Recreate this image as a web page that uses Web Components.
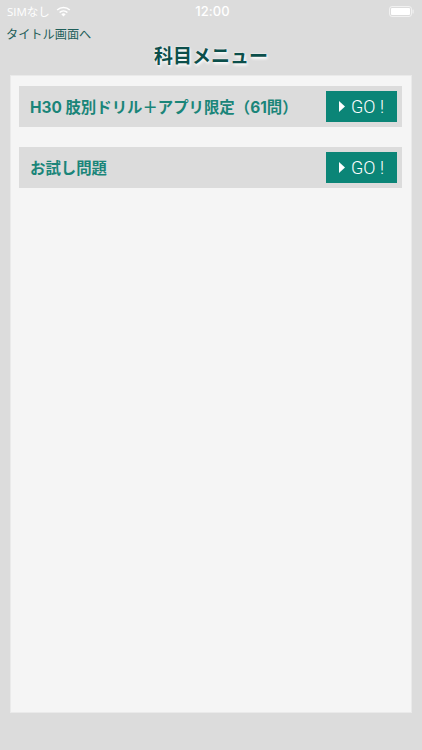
<!DOCTYPE html>
<html lang="ja">
<head>
<meta charset="utf-8">
<title>科目メニュー</title>
<style>
  html, body { margin: 0; height: 100%; }
  body { background: #dcdcdc; font-family: "Open Sans", "Noto Sans CJK JP", sans-serif; }
</style>
</head>
<body>
<menu-screen>
  <menu-row label="H30 肢別ドリル＋アプリ限定（61問）"></menu-row>
  <menu-row label="お試し問題"></menu-row>
</menu-screen>

<script>
const FONT = '"Open Sans", "Noto Sans CJK JP", sans-serif';

class StatusBar extends HTMLElement {
  constructor() {
    super();
    this.attachShadow({ mode: 'open' });
    this.shadowRoot.innerHTML = `
      <style>
        :host { display: grid; grid-template-columns: 1fr auto 1fr; align-items: center; height: 22px; padding: 0 8px 0 7px; color: #fff; font: 12px ${FONT}; }
        .left { display: flex; align-items: center; gap: 6px; }
        .carrier { font-size: 11.5px; }
        .time { font: 500 13px Inter, sans-serif; letter-spacing: .1px; padding-left: 4px; }
        .right { display: flex; justify-content: flex-end; }
        svg { display: block; }
      </style>
      <div class="left">
        <span class="carrier">SIMなし</span>
        <svg width="15" height="11" viewBox="0 0 15 11">
          <path d="M7.5 10.6 5.3 8.2a3.2 3.2 0 0 1 4.4 0Z" fill="#fff"/>
          <path d="M3.6 6.5a5.7 5.7 0 0 1 7.8 0" fill="none" stroke="#fff" stroke-width="1.6"/>
          <path d="M1.2 4a9.2 9.2 0 0 1 12.6 0" fill="none" stroke="#fff" stroke-width="1.6"/>
        </svg>
      </div>
      <span class="time">12:00</span>
      <div class="right">
        <svg width="25" height="11" viewBox="0 0 25 11">
          <rect x=".5" y=".5" width="22" height="10" rx="2.5" fill="none" stroke="#fff" stroke-opacity=".6"/>
          <rect x="2" y="2" width="19" height="7" rx="1" fill="#fff"/>
          <rect x="23.5" y="3.5" width="1.2" height="4" rx=".6" fill="#fff" fill-opacity=".6"/>
        </svg>
      </div>
    `;
  }
}

class GoButton extends HTMLElement {
  constructor() {
    super();
    this.attachShadow({ mode: 'open' });
    this.shadowRoot.innerHTML = `
      <style>
        :host { display: flex; align-items: center; justify-content: center; gap: 6px; width: 71px; height: 31px; background: #0b8577; color: #fff; font: 300 18px Roboto, sans-serif; }
        svg { display: block; }
      </style>
      <svg width="6" height="11" viewBox="0 0 6 11"><path d="M0 0 6 5.5 0 11Z" fill="#fff"/></svg>
      <span>GO !</span>
    `;
  }
}

class MenuRow extends HTMLElement {
  constructor() {
    super();
    this.attachShadow({ mode: 'open' });
  }

  connectedCallback() {
    this.shadowRoot.innerHTML = `
      <style>
        :host { display: flex; align-items: center; justify-content: space-between; height: 41px; padding: 0 5px 0 11px; background: #dcdcdc; }
        .label { color: #1a8579; font: bold 15.4px Inter, "Noto Sans CJK JP", sans-serif; white-space: nowrap; padding-bottom: 2px; }
      </style>
      <span class="label">${this.getAttribute('label')}</span>
      <go-button></go-button>
    `;
  }
}

class MenuScreen extends HTMLElement {
  constructor() {
    super();
    this.attachShadow({ mode: 'open' });
    this.shadowRoot.innerHTML = `
      <style>
        :host { display: flex; flex-direction: column; box-sizing: border-box; height: 750px; padding-bottom: 37px; }
        .back { padding: 5px 0 0 6px; height: 14px; line-height: 15px; color: #1f5f5a; font-size: 12.2px; }
        h1 { margin: 0; height: 34px; line-height: 30px; text-align: center; color: #0c4f4b; font-size: 19px; font-weight: bold; text-shadow: 1px 2px 3px rgba(255,255,255,.95), 0 0 2px #fff; }
        .panel { flex: 1; display: flex; flex-direction: column; gap: 20px; margin: 0 10px; padding: 10px 9px 9px 8px; background: #f5f5f5; border: 1px solid #eaeaea; box-sizing: border-box; }
      </style>
      <status-bar></status-bar>
      <div class="back">タイトル画面へ</div>
      <h1>科目メニュー</h1>
      <div class="panel"><slot></slot></div>
    `;
  }
}

customElements.define('status-bar', StatusBar);
customElements.define('go-button', GoButton);
customElements.define('menu-row', MenuRow);
customElements.define('menu-screen', MenuScreen);
</script>
</body>
</html>
